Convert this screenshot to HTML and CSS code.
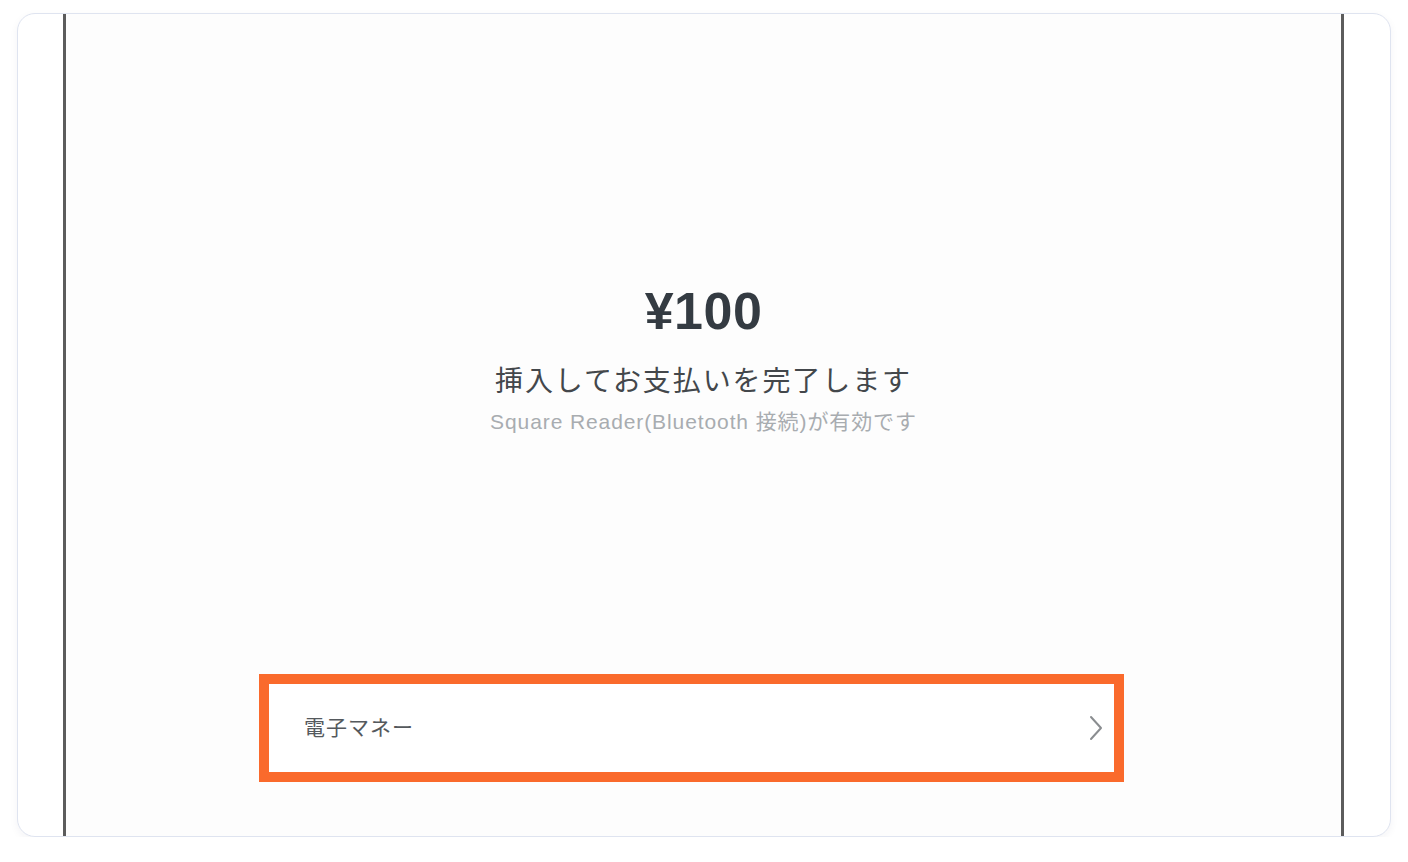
FILE: index.html
```html
<!DOCTYPE html>
<html lang="ja">
<head>
<meta charset="utf-8">
<title>Square 決済</title>
<link rel="stylesheet" href="styles.css">
</head>
<body>
<div class="card">
  <div class="device">
    <div class="screen">
      <div class="summary">
        <div class="amount">¥100</div>
        <div class="instruction">挿入してお支払いを完了します</div>
        <div class="reader">Square Reader(Bluetooth 接続)が有効です</div>
      </div>
      <div class="option">
        <span class="option-label">電子マネー</span>
        <svg class="chevron" width="16" height="26" viewBox="0 0 16 26" aria-hidden="true">
          <path d="M3 2 L13 13 L3 24" fill="none" stroke="#8a8d90" stroke-width="2" stroke-linecap="round" stroke-linejoin="round"/>
        </svg>
      </div>
    </div>
  </div>
</div>
</body>
</html>
```

FILE: styles.css
```css
html, body {
  margin: 0;
  padding: 0;
  background: #ffffff;
}
body {
  padding: 13px 0 0 17px;
  font-family: "Noto Sans", "Noto Sans CJK JP", sans-serif;
}
.card {
  box-sizing: border-box;
  width: 1374px;
  height: 824px;
  border: 1px solid #dfe4f0;
  border-radius: 18px;
  background: #ffffff;
  box-shadow: 0 3px 8px rgba(30, 40, 80, 0.05);
  overflow: hidden;
  padding: 0 46px 0 45px;
}
.device {
  height: 100%;
  box-sizing: border-box;
  border-left: 3px solid #5c5c5c;
  border-right: 3px solid #5c5c5c;
  background: #fdfdfd;
}
.screen {
  height: 100%;
  display: flex;
  flex-direction: column;
}
.summary {
  display: flex;
  flex-direction: column;
  align-items: center;
  padding-top: 267px;
}
.amount {
  font-family: "Liberation Sans", "Noto Sans", sans-serif;
  font-weight: 700;
  font-size: 52px;
  line-height: 60px;
  color: #343b42;
  letter-spacing: 0.5px;
}
.instruction {
  margin-top: 18px;
  font-family: "Noto Sans CJK JP", sans-serif;
  font-size: 28px;
  line-height: 40px;
  letter-spacing: 1.9px;
  color: #43474b;
}
.reader {
  margin-top: 9px;
  font-family: "Liberation Sans", "Noto Sans CJK JP", sans-serif;
  font-size: 21px;
  line-height: 28px;
  letter-spacing: 0.9px;
  color: #a8acb0;
}
.option {
  margin: auto 217px 54px 193px;
  box-sizing: border-box;
  height: 108px;
  border: 10px solid #fa6a2c;
  background: #ffffff;
  display: flex;
  align-items: center;
  justify-content: space-between;
  padding: 0 10px 0 35px;
}
.option-label {
  font-family: "Noto Sans CJK JP", sans-serif;
  font-size: 21px;
  color: #55595d;
  letter-spacing: 1px;
  margin-bottom: 5px;
}
.chevron {
  display: block;
}
```
